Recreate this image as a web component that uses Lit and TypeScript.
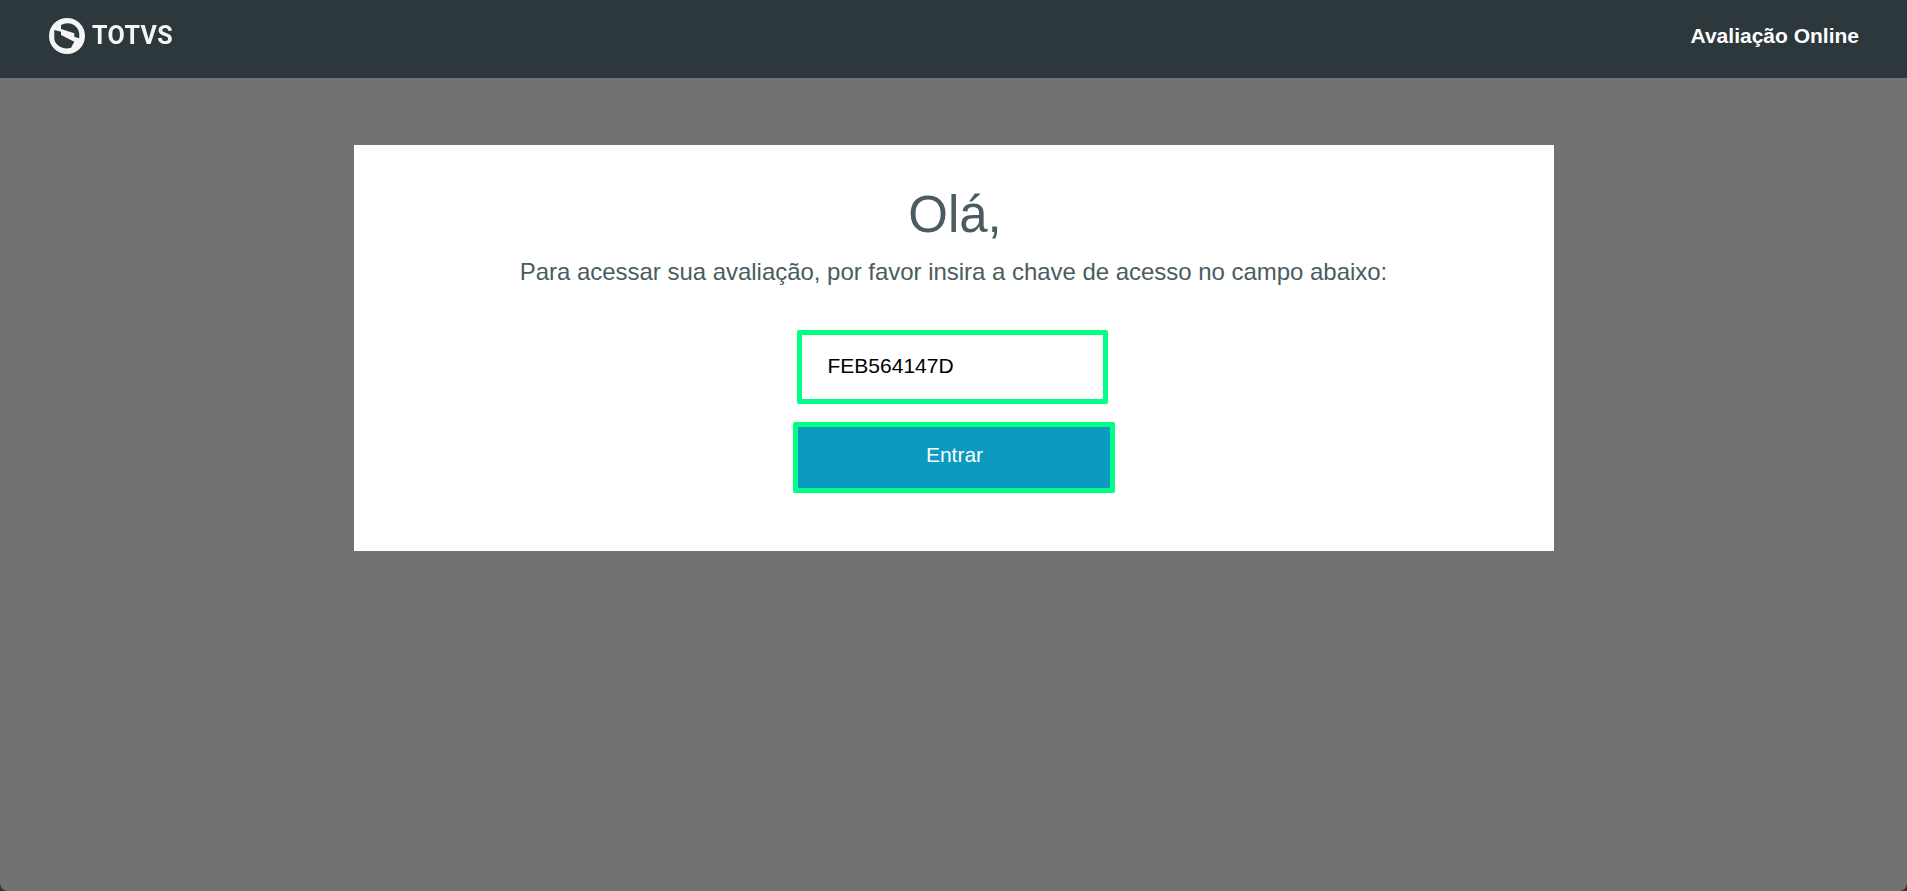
import { LitElement, html, css } from "lit";
import { customElement } from "lit/decorators.js";

@customElement("app-root")
export class AppRoot extends LitElement {
  static styles = css`
    :host {
      display: flex;
      flex-direction: column;
      height: 891px;
      background: #333;
      font-family: "Liberation Sans", Arial, sans-serif;
      overflow: hidden;
    }
    .top {
      height: 78px;
      flex: none;
      background: #2c383b;
      display: flex;
      align-items: center;
      justify-content: space-between;
      padding: 0 48px 0 49px;
      box-sizing: border-box;
    }
    .logo {
      display: flex;
      align-items: center;
      gap: 7px;
      color: #f4f5f5;
      filter: blur(0.4px);
      margin-bottom: 6px;
    }
    .logo svg { display: block; }
    .word {
      font-family: Roboto, "Liberation Sans", sans-serif;
      font-weight: 700;
      font-size: 25px;
      line-height: 36px;
      letter-spacing: 0.4px;
    }
    .title { color: #fff; font-size: 21px; font-weight: 700; margin-bottom: 6px; }
    .main {
      flex: 1;
      display: flex;
      flex-direction: column;
      align-items: center;
      padding-top: 67px;
      background-color: #727272;
      background-image: repeating-conic-gradient(#6e6e6e 0 25%, #767676 0 50%);
      background-size: 2px 2px;
      border-radius: 0 0 8px 8px;
    }
    .card {
      width: 1200px;
      height: 406px;
      box-sizing: border-box;
      background: #fff;
      display: flex;
      flex-direction: column;
      align-items: center;
      padding-top: 40px;
    }
    h1 {
      margin: 0;
      padding-left: 3px;
      font-size: 51px;
      font-weight: 400;
      line-height: 60px;
      color: #4a5c60;
    }
    p {
      margin: 11px 0 0;
      font-size: 24px;
      line-height: 32px;
      color: #4a5c60;
      letter-spacing: -0.03px;
    }
    .field {
      margin-top: 42px;
      margin-left: -3px;
      width: 311px;
      height: 74px;
      box-sizing: border-box;
      border: 5px solid #00ff84;
      border-radius: 2px;
      padding: 0 26px 2px;
      display: flex;
      align-items: center;
      font-size: 21px;
      color: #000;
    }
    .btn {
      margin-top: 18px;
      width: 322px;
      height: 71px;
      box-sizing: border-box;
      border: 5px solid #00ff84;
      border-radius: 2px;
      background: #0c9abe;
      color: #fff;
      font-size: 21px;
      display: flex;
      align-items: center;
      justify-content: center;
      padding: 0 0 6px 2px;
    }
  `;

  render() {
    return html`
      <header class="top">
        <div class="logo">
          <svg width="36" height="36" viewBox="0 0 36 36" aria-hidden="true">
            <circle cx="18" cy="18" r="18" fill="currentColor" />
            <path fill="#2c383b" d="M12 7Q15 5.300 18.700 5.300Q24 5.500 27 8.700Q30.300 12 30.300 17V20.300L25.300 18.700V15.300L12 11Z" />
            <path fill="#2c383b" d="M5.300 12L12 13.700V17L25.300 23.700L22 29.700Q19 30.700 15.300 30.300Q11 29.500 8.700 27Q5.300 24 5.300 20.300Z" />
          </svg>
          <span class="word">TOTVS</span>
        </div>
        <span class="title">Avaliação Online</span>
      </header>
      <main class="main">
        <section class="card">
          <h1>Olá,</h1>
          <p>Para acessar sua avaliação, por favor insira a chave de acesso no campo abaixo:</p>
          <div class="field">FEB564147D</div>
          <div class="btn">Entrar</div>
        </section>
      </main>
    `;
  }
}
